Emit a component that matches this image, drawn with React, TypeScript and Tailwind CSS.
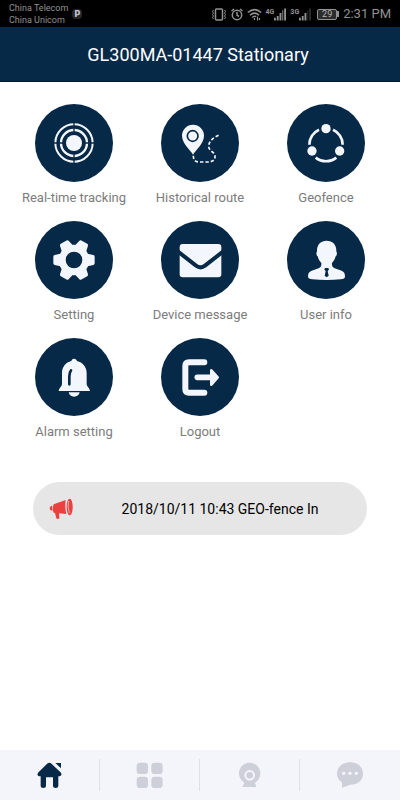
import type { ReactNode } from "react";

const NAVY = "#072948";
const PALE = "#f3f6fc";

const TrackingIcon = () => (
  <>
    <circle cx="117" cy="117" r="56" fill="none" stroke={PALE} strokeWidth="6" />
    <circle cx="117" cy="117" r="39" fill="none" stroke={PALE} strokeWidth="7" />
    <path d="M117 56V90M117 144V178M56 117H90M144 117H178" stroke={NAVY} strokeWidth="4" />
    <circle cx="117" cy="117" r="24" fill={PALE} />
  </>
);

const RouteIcon = () => (
  <>
    <path
      d="M96 152C90 140 63 119 63 95A33 33 0 0 1 129 95C129 119 102 140 96 152Z"
      fill={PALE}
    />
    <circle cx="95" cy="96" r="16" fill="none" stroke={NAVY} strokeWidth="5" />
    <path
      d="M97 155C97 170 104 174 118 174H140C156 174 163 167 162 156C161 143 142 141 143 126C144 111 158 100 175 93"
      fill="none"
      stroke={PALE}
      strokeWidth="5"
      strokeDasharray="10 6"
    />
  </>
);

const GeofenceIcon = () => (
  <>
    <path
      d="M96 77A50 50 0 0 0 67 122M138 77A50 50 0 0 1 167 122M86 161A50 50 0 0 0 148 161"
      fill="none"
      stroke={PALE}
      strokeWidth="8"
    />
    <circle cx="117" cy="74" r="14" fill={PALE} />
    <circle cx="75" cy="141" r="14" fill={PALE} />
    <circle cx="158" cy="141" r="14" fill={PALE} />
  </>
);

const GearIcon = () => (
  <g transform="translate(117 117)">
    <circle r="46" fill={PALE} />
    {[30, 90, 150, 210, 270, 330].map((angle) => (
      <path
        key={angle}
        d="M-15 -36L-10 -57H10L15 -36Z"
        transform={`rotate(${angle})`}
        fill={PALE}
        stroke={PALE}
        strokeWidth="10"
        strokeLinejoin="round"
      />
    ))}
    <circle r="25" fill={NAVY} />
  </g>
);

const MailIcon = () => (
  <>
    <rect x="56" y="69" width="125" height="100" rx="9" fill={PALE} />
    <path
      d="M50 91L105 134Q119 144 132 134L187 91"
      fill="none"
      stroke={NAVY}
      strokeWidth="12"
    />
  </>
);

const UserIcon = () => (
  <>
    <path
      d="M119 59C102 59 90 70 90 88V92C87 93 88 104 92 106C94 115 98 121 103 126C104 135 101 139 95 142L74 149C66 152 63 157 63 166C63 173 68 174 76 175C104 178 134 178 161 175C170 174 174 173 174 166C174 157 171 152 164 149L143 142C137 139 134 135 135 126C140 121 144 115 146 106C150 104 151 93 148 92V88C148 70 136 59 119 59Z"
      fill={PALE}
    />
    <path d="M114 141H124L126 146L122 150L125 164L119 169L113 164L116 150L112 146Z" fill={NAVY} />
  </>
);

const BellIcon = () => (
  <>
    <path
      d="M117 62C112 62 110 65 109 69C92 73 81 87 81 105V138C81 145 72 150 71 159H165C164 150 155 145 155 138V105C155 87 143 73 126 69C125 65 122 62 117 62Z"
      fill={PALE}
    />
    <path d="M101 163H134C132 172 126 176 117 176C109 176 103 172 101 163Z" fill={PALE} />
    <path
      d="M103 139V115Q103 103 108 97"
      fill="none"
      stroke={NAVY}
      strokeWidth="8"
      strokeLinecap="round"
    />
  </>
);

const LogoutIcon = () => (
  <g fill="none" stroke={PALE} strokeLinecap="round" strokeLinejoin="round">
    <path d="M130 73H84Q73 73 73 84V153Q73 164 84 164H130" strokeWidth="18" />
    <path d="M109 118H150" strokeWidth="17" />
    <path d="M151 97L170 118L151 140Z" fill={PALE} strokeWidth="8" />
  </g>
);

const menu: { label: string; icon: ReactNode }[] = [
  { label: "Real-time tracking", icon: <TrackingIcon /> },
  { label: "Historical route", icon: <RouteIcon /> },
  { label: "Geofence", icon: <GeofenceIcon /> },
  { label: "Setting", icon: <GearIcon /> },
  { label: "Device message", icon: <MailIcon /> },
  { label: "User info", icon: <UserIcon /> },
  { label: "Alarm setting", icon: <BellIcon /> },
  { label: "Logout", icon: <LogoutIcon /> },
];

const tabs: { label: string; icon: ReactNode }[] = [
  {
    label: "Home",
    icon: (
      <g fill={NAVY}>
        <path d="M38 10Q43 6 48 10L78 38Q82 46 74 49H70V78Q70 84 62 84Q54 84 54 78V52H33V78Q33 84 25 84Q17 84 17 78V49H12Q5 46 9 38Z" />
        <path d="M61 9H78V25Z" />
      </g>
    ),
  },
  {
    label: "Apps",
    icon: (
      <g fill="#cdd0d8">
        <rect x="5" y="8" width="34" height="34" rx="10" />
        <rect x="49" y="8" width="34" height="34" rx="10" />
        <rect x="5" y="50" width="34" height="34" rx="10" />
        <rect x="49" y="50" width="34" height="34" rx="10" />
      </g>
    ),
  },
  {
    label: "Camera",
    icon: (
      <>
        <circle cx="44" cy="40" r="32" fill="#cdd0d8" />
        <path d="M29 66H59L64 81H22Z" fill="#cdd0d8" />
        <circle cx="44" cy="46" r="13" fill="none" stroke="#f4f5fa" strokeWidth="6" />
        <circle cx="44" cy="46" r="8" fill="#cdd0d8" />
      </>
    ),
  },
  {
    label: "Messages",
    icon: (
      <>
        <path
          d="M46 7C68 7 84 21 84 41S68 74 46 74L21 83V67C11 60 6 52 6 41C6 21 23 7 46 7Z"
          fill="#cdd0d8"
        />
        <circle cx="26" cy="40" r="5" fill="#f4f5fa" />
        <circle cx="45" cy="40" r="5" fill="#f4f5fa" />
        <circle cx="64" cy="40" r="5" fill="#f4f5fa" />
      </>
    ),
  },
];

function Signal({ name, full }: { name: string; full: boolean }) {
  return (
    <div className="flex">
      <span className="text-[7px] leading-[8px] font-bold">{name}</span>
      <svg width="12" height="13" viewBox="0 0 13 13" fill="currentColor">
        <path d="M0 10h2v3H0zM3 8h2v5H3zM6 5h2v8H6z" />
        <path d="M9 2h1v11H9z" opacity={full ? 1 : 0.3} />
        <path d="M11 0h2v13h-2z" opacity={full ? 1 : 0.3} />
      </svg>
    </div>
  );
}

function StatusBar() {
  return (
    <div className="flex h-[27px] items-center bg-black pt-px pr-[9px] pl-[9px] text-[#929292]">
      <div className="text-[9px] leading-[12px]">
        <p>China Telecom</p>
        <p>China Unicom</p>
      </div>
      <span className="ml-1 flex h-[10px] w-[10px] items-center justify-center rounded-sm bg-[#25252b] text-[9px] leading-[10px] font-black text-[#c4c4cc]">
        P
      </span>
      <div className="ml-auto flex items-center gap-1">
        <svg width="16" height="13" viewBox="0 0 16 13" fill="none" stroke="currentColor">
          <rect x="4.500" y="1" width="7" height="11" rx="1" strokeWidth="1.500" />
          <path d="M2.500 2l-1 1.500 1 1.500-1 1.500 1 1.500-1 1.500 1 1.500M13.500 2l1 1.500-1 1.500 1 1.500-1 1.500 1 1.500-1 1.500" />
        </svg>
        <svg width="12" height="13" viewBox="0 0 12 13" fill="none" stroke="currentColor" strokeWidth="1.500">
          <circle cx="6" cy="7" r="4.700" />
          <path d="M6 4v3.200l2 1.300M.5 3l2.500-2M11.500 3L9 1" />
        </svg>
        <svg width="15" height="13" viewBox="0 0 15 13" fill="none" stroke="currentColor" strokeWidth="1.500">
          <path d="M.8 4.500Q7.500-1.200 14.200 4.500M3 7.200Q7.500 3 12 7.200M5.200 9.500Q7.500 7.300 9 8.800" />
          <path d="M7.500 10v2M10.500 8.500v4M12.500 10v2" strokeWidth="1.200" />
        </svg>
        <Signal name="4G" full />
        <Signal name="3G" full={false} />
        <div className="ml-0.5 flex items-center">
          <span className="flex h-[11px] w-5 items-center justify-center rounded-xs border border-[#929292] bg-[#2c2c2c] text-[9px] leading-[9px] text-[#b4b4b4]">
            29
          </span>
          <span className="h-1.5 w-0.5 bg-[#929292]" />
        </div>
        <span className="text-[13px] leading-[16px]">2:31 PM</span>
      </div>
    </div>
  );
}

function App() {
  return (
    <div className="flex min-h-screen flex-col bg-white font-[Roboto,sans-serif]">
      <StatusBar />
      <header className="flex h-[55px] items-center justify-center border-b border-[#03182b] bg-[#072948] pt-0.5 pr-1">
        <h1 className="text-[18px] leading-6 text-white">GL300MA-01447 Stationary</h1>
      </header>

      <main className="flex-1">
        <div className="grid grid-cols-3 gap-y-3.5 px-[11px] pt-[22px]">
          {menu.map((item) => (
            <button key={item.label} className="flex flex-col items-center gap-1.5">
              <svg className="h-[78px] w-[78px] rounded-full bg-[#072948]" viewBox="0 0 234 234">
                {item.icon}
              </svg>
              <span className="text-[13px] leading-[19px] whitespace-nowrap text-[#7c7c7c]">
                {item.label}
              </span>
            </button>
          ))}
        </div>

        <div className="mx-[33px] mt-[41px] flex h-[53px] items-center rounded-full bg-[#e6e6e6] pr-6 pl-4">
          <svg className="h-[22px] w-6 shrink-0" viewBox="0 0 72 66" fill="#ea4040">
            <path d="M14 19L50 6Q47 27 52 48L30 46L31 61Q26 65 22 61L18 45L14 44Q9 32 14 19Z" />
            <path d="M10 23Q2 24 2 32Q3 38 11 38Q9 31 10 23Z" />
            <ellipse cx="62" cy="27" rx="9" ry="25" />
            <path d="M59 9Q55 27 61 46" fill="none" stroke="#e6e6e6" strokeWidth="2" />
          </svg>
          <p className="flex-1 pl-6 text-center text-[14px] leading-5 text-black">
            2018/10/11 10:43 GEO-fence In
          </p>
        </div>
      </main>

      <nav className="grid h-[50px] grid-cols-4 items-center divide-x divide-[#dfe0e5] bg-[#f4f5fa]">
        {tabs.map((tab) => (
          <button key={tab.label} aria-label={tab.label} className="flex h-8 items-center justify-center">
            <svg width="30" height="30" viewBox="0 0 90 90">
              {tab.icon}
            </svg>
          </button>
        ))}
      </nav>
    </div>
  );
}

export default App;
